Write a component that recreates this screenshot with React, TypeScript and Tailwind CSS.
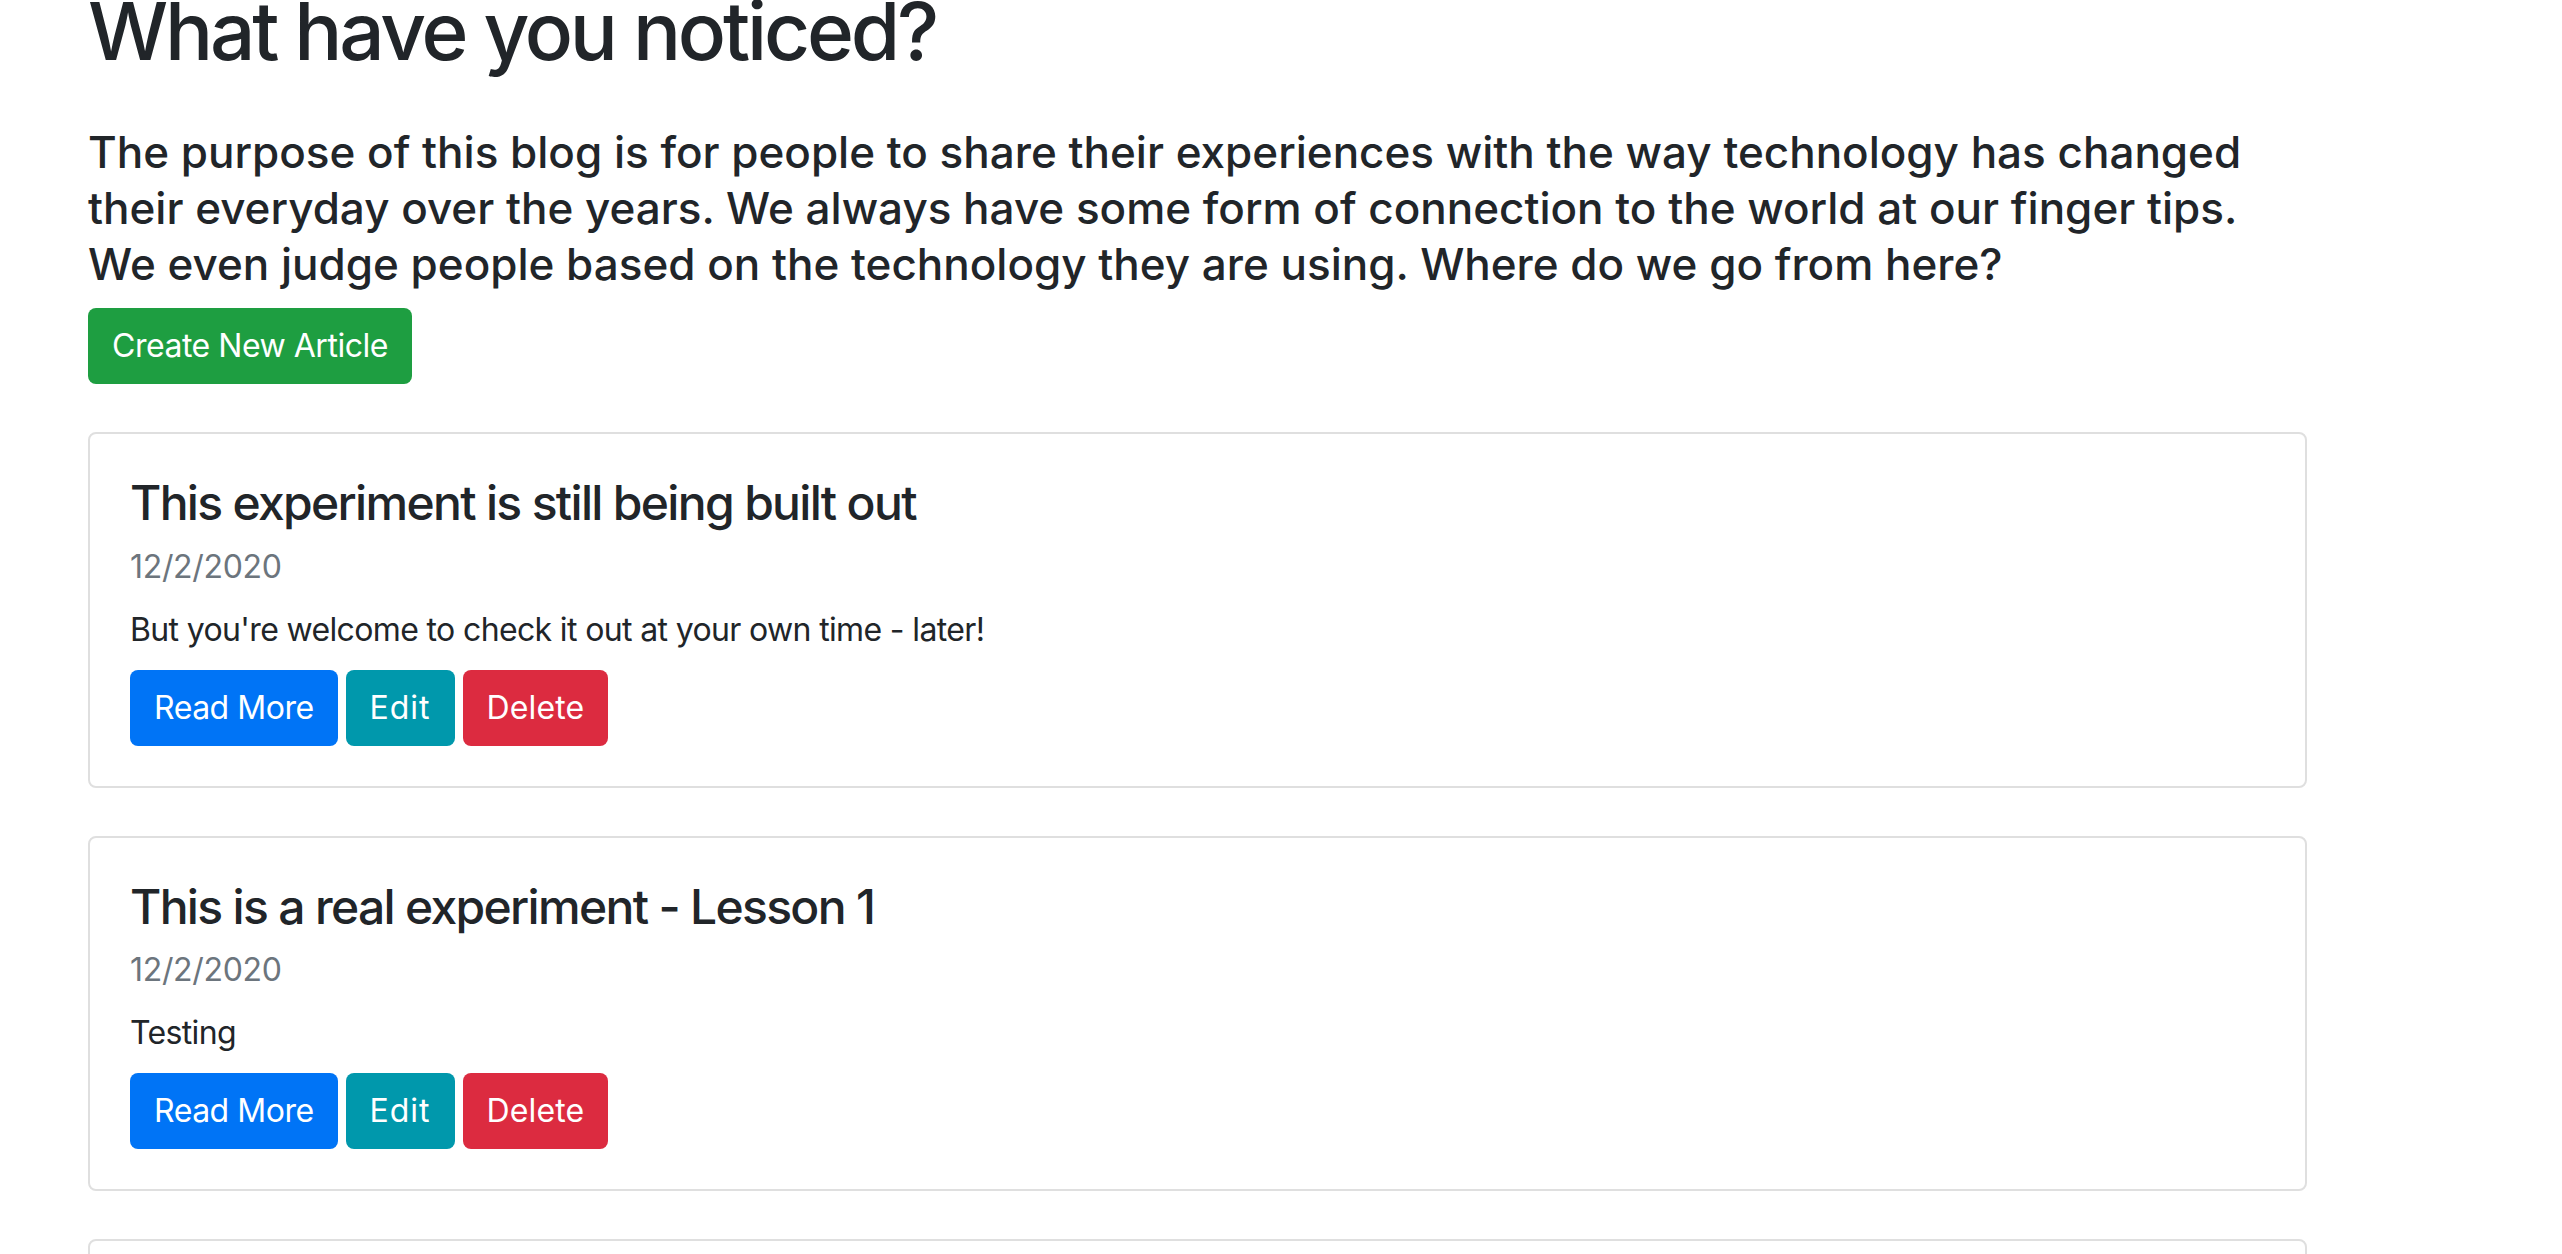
import React from "react"

const articles = [
  {
    title: "This experiment is still being built out",
    date: "12/2/2020",
    text: "But you're welcome to check it out at your own time - later!",
  },
  {
    title: "This is a real experiment - Lesson 1",
    date: "12/2/2020",
    text: "Testing",
  },
  {
    title: "Hello World",
    date: "12/1/2020",
    text: "First post",
  },
]

function ArticleCard({ title, date, text }: { title: string; date: string; text: string }) {
  return (
    <div className="mt-[48px] border-2 border-[#dfdfdf] rounded-[8px] p-[40px]">
      <h4 className="text-[48px] leading-[57.6px] font-medium tracking-[-0.035em] text-[#212529]">{title}</h4>
      <div className="mt-[16px] text-[32px] leading-[38px] tracking-[-0.01em] text-[#6c757d]">{date}</div>
      <p className="mt-[20px] text-[32px] leading-[48px] tracking-[-0.02em] text-[#212529]">{text}</p>
      <div className="mt-[16px] flex gap-[8px]">
        <button className="h-[76px] px-[24px] rounded-[8px] bg-[#0074f6] text-white text-[32px] tracking-[-0.015em]">Read More</button>
        <button className="h-[76px] px-[24px] rounded-[8px] bg-[#0098ac] text-white text-[32px] tracking-[0.03em]">Edit</button>
        <button className="h-[76px] px-[24px] rounded-[8px] bg-[#dc2b40] text-white text-[32px] tracking-[0.005em]">Delete</button>
      </div>
    </div>
  )
}

export default function App() {
  return (
    <div className="min-h-screen bg-white overflow-hidden font-['Inter','Noto_Sans',sans-serif]">
      <div className="ml-[88px] w-[2219px] -mt-[17px]">
        {/* Header */}
        <h1 className="text-[80px] leading-[96px] font-medium tracking-[-0.04em] text-[#212529]">What have you noticed?</h1>
        <p className="mt-[45px] text-[44px] leading-[56px] font-medium text-[#212529]">
          The purpose of this blog is for people to share their experiences with the way technology has changed
          their everyday over the years. We always have some form of connection to the world at our finger tips.
          We even judge people based on the technology they are using. Where do we go from here?
        </p>
        <button className="mt-[16px] h-[76px] px-[24px] rounded-[8px] bg-[#1e9e41] text-white text-[32px] tracking-[-0.015em]">
          Create New Article
        </button>

        {/* Articles */}
        {articles.map((a) => (
          <ArticleCard key={a.title} {...a} />
        ))}
      </div>
    </div>
  )
}
